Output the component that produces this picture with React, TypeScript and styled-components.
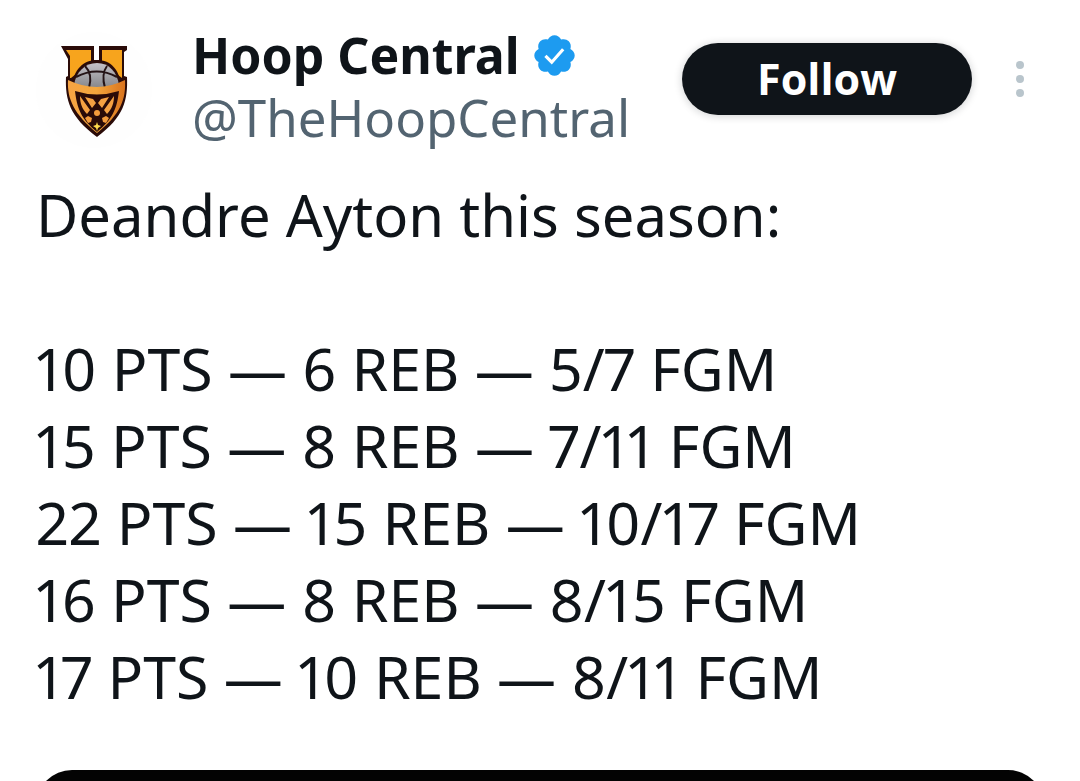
import React from 'react';
import styled, { createGlobalStyle } from 'styled-components';

const GlobalStyle = createGlobalStyle`
  * { box-sizing: border-box; }
  body {
    margin: 0;
    background: #fff;
    color: #0f1419;
    font-family: "Noto Sans", "Open Sans", sans-serif;
  }
`;

const Post = styled.article`
  display: flex;
  flex-direction: column;
  height: 100vh;
  padding: 24px 36px 0;
`;

const Header = styled.header`
  display: flex;
  align-items: flex-start;
`;

const Avatar = styled.a`
  flex: none;
  display: flex;
  width: 116px;
  height: 116px;
  margin: 8px 40px 0 0;
  border-radius: 50%;
  background: #fefefe;
`;

const Author = styled.div`
  flex: 1;
  min-width: 0;
  display: flex;
  flex-direction: column;
`;

const NameRow = styled.div`
  display: flex;
  align-items: center;
  gap: 14px;
`;

const Name = styled.a`
  color: #0f1419;
  font-size: 50px;
  line-height: 62px;
  font-weight: 700;
  text-decoration: none;
  white-space: nowrap;
`;

const Handle = styled.a`
  color: #536471;
  font-size: 51px;
  line-height: 62px;
  text-decoration: none;
  white-space: nowrap;
`;

const FollowButton = styled.button`
  flex: none;
  width: 290px;
  height: 72px;
  margin-top: 19px;
  padding: 0;
  border: 0;
  border-radius: 36px;
  background: #0f1419;
  color: #fff;
  font-family: "Open Sans", sans-serif;
  font-size: 43px;
  line-height: 72px;
  font-weight: 700;
  box-shadow: 0 1px 8px rgba(15, 20, 25, 0.2);
`;

const MoreButton = styled.button`
  flex: none;
  display: flex;
  justify-content: center;
  align-items: center;
  width: 48px;
  height: 72px;
  margin: 19px 0 0 24px;
  padding: 0;
  border: 0;
  background: none;
`;

const Text = styled.div`
  padding-top: 28px;
  font-size: 58px;
  line-height: 77px;
`;

const Line = styled.p`
  margin: 0;
  white-space: nowrap;
`;

const Stats = styled.div`
  margin-top: 77px;
  font-size: 59px;
  font-variant-numeric: proportional-nums;
`;

const MediaClip = styled.div`
  flex: 1 0 0;
  margin-top: 55px;
  overflow: hidden;
`;

const Media = styled.div`
  height: 560px;
  border-radius: 36px;
  background: #030303;
`;

const games = [
  '10 PTS — 6 REB — 5/7 FGM',
  '15 PTS — 8 REB — 7/11 FGM',
  '22 PTS — 15 REB — 10/17 FGM',
  '16 PTS — 8 REB — 8/15 FGM',
  '17 PTS — 10 REB — 8/11 FGM',
];

const Logo = () => (
  <svg viewBox="0 0 116 116" width="116" height="116" aria-hidden="true">
    <defs>
      <linearGradient id="rim" x1="0" x2="1" y1="0" y2="0">
        <stop offset="0" stopColor="#f6a444" />
        <stop offset="0.5" stopColor="#f4a63c" />
        <stop offset="1" stopColor="#d9731d" />
      </linearGradient>
      <linearGradient id="ball" x1="0" x2="0" y1="0" y2="1">
        <stop offset="0" stopColor="#c4c1c8" />
        <stop offset="1" stopColor="#858589" />
      </linearGradient>
    </defs>
    <path d="M25 14H58V30H62V14H91V18L88 20V44L91 45C92 68 88 85 61 105C34 85 29 68 30 45L32 44V27Z" fill="#2a0b08" />
    <path d="M58 13H63V29H58Z" fill="#fff" />
    <path d="M30 18H55V30L35 46H34V24Z" fill="#f7a41d" />
    <path d="M66 18H86V46L66 31Z" fill="#f7a41d" />
    <path d="M36 55C37 38 47 28 61 28S84 38 85 55Z" fill="#2a0b08" />
    <path d="M38 53C40 40 49 31 61 31S81 40 83 53Q61 60 38 53Z" fill="url(#ball)" />
    <path d="M49 34Q57 42 53 56M71 34Q65 42 69 56M40 45Q61 34 81 45" fill="none" stroke="#241316" strokeWidth="2" />
    <path d="M32 48Q61 62 89 48C90 67 85 82 61 101C38 82 31 67 32 48Z" fill="url(#rim)" />
    <path d="M39 59Q61 66 83 59C81 76 77 87 61 100C45 87 41 76 39 59Z" fill="#2a0b08" />
    <path d="M44 64L54 78L51 82C46 77 44 71 44 64ZM49 65L57 67L60 71L56 76ZM78 64L68 78L71 82C76 77 78 71 78 64ZM73 65L65 67L62 71L66 76Z" fill="#f5a142" />
    <circle cx="61" cy="81" r="3" fill="#f39b3c" />
    <path d="M49 86L52 84L56 86L55 90L52 91ZM73 86L70 84L66 86L67 90L70 91Z" fill="#f39b3c" />
    <path d="M61 90L62 93L65 94L62 96L61 99L60 96L57 94L60 93Z" fill="#ffdc4d" />
  </svg>
);

const Verified = () => (
  <svg viewBox="1.6 1.6 20.8 20.8" width="41" height="41" role="img" aria-label="Verified account">
    <path
      fill="#1d9bf0"
      d="M22.25 12c0-1.43-.88-2.67-2.19-3.34.46-1.39.2-2.9-.81-3.91s-2.52-1.27-3.91-.81c-.66-1.31-1.91-2.19-3.34-2.19s-2.67.88-3.33 2.19c-1.4-.46-2.91-.2-3.92.81s-1.26 2.52-.8 3.91c-1.31.67-2.2 1.91-2.2 3.34s.89 2.67 2.2 3.34c-.46 1.39-.21 2.9.8 3.91s2.52 1.26 3.91.81c.67 1.31 1.91 2.19 3.34 2.19s2.68-.88 3.34-2.19c1.39.45 2.9.2 3.91-.81s1.27-2.52.81-3.91c1.31-.67 2.19-1.91 2.19-3.34z"
    />
    <path fill="none" stroke="#fff" strokeWidth="1.6" d="M7.4 12.2l3.2 3.2 5.8-6.6" />
  </svg>
);

export default function App() {
  return (
    <>
      <GlobalStyle />
      <Post>
        <Header>
          <Avatar href="#profile" aria-label="Hoop Central profile">
            <Logo />
          </Avatar>
          <Author>
            <NameRow>
              <Name href="#profile">Hoop Central</Name>
              <Verified />
            </NameRow>
            <Handle href="#profile">@TheHoopCentral</Handle>
          </Author>
          <FollowButton type="button">Follow</FollowButton>
          <MoreButton type="button" aria-label="More options">
            <svg width="8" height="38" viewBox="0 0 8 38" aria-hidden="true">
              <g fill="#b9c5cc">
                <circle cx="4" cy="5" r="4" />
                <circle cx="4" cy="19" r="4" />
                <circle cx="4" cy="33" r="4" />
              </g>
            </svg>
          </MoreButton>
        </Header>
        <Text>
          <Line>Deandre Ayton this season:</Line>
          <Stats>
            {games.map((game) => (
              <Line key={game}>{game}</Line>
            ))}
          </Stats>
        </Text>
        <MediaClip>
          <Media />
        </MediaClip>
      </Post>
    </>
  );
}
